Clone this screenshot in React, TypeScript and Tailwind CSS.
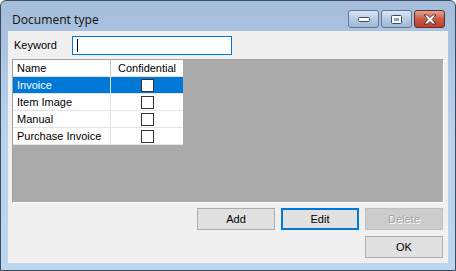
import { useState } from 'react';

interface DocType {
  name: string;
  confidential: boolean;
}

const rows: DocType[] = [
  { name: 'Invoice', confidential: false },
  { name: 'Item Image', confidential: false },
  { name: 'Manual', confidential: false },
  { name: 'Purchase Invoice', confidential: false },
];

function CaptionButton({ kind }: { kind: 'min' | 'max' | 'close' }) {
  const base =
    kind === 'close'
      ? 'bg-gradient-to-b from-[#e3a493] via-[#cb5a45] to-[#b9412d] border-[#6b2a23]'
      : 'bg-gradient-to-b from-[#dbe6f3] via-[#b7cbe3] to-[#9fb8d6] border-[#5f7694]';
  return (
    <div className={`w-[31px] h-[18px] rounded-[3px] border flex items-center justify-center ${base}`}>
      {kind === 'min' && (
        <svg width="12" height="5" viewBox="0 0 12 5">
          <rect x="0.5" y="0.5" width="11" height="4" rx="1" fill="#fff" stroke="#3a4a60" />
        </svg>
      )}
      {kind === 'max' && (
        <svg width="11" height="9" viewBox="0 0 11 9">
          <rect x="0.5" y="0.5" width="10" height="8" rx="1" fill="#fff" stroke="#3a4a60" />
          <rect x="3" y="3" width="5" height="3" fill="#8aa3c3" />
        </svg>
      )}
      {kind === 'close' && (
        <svg width="14" height="11" viewBox="0 0 14 11">
          <path
            d="M1 1h3.5L7 3.6 9.5 1H13L9.2 5.5 13 10H9.5L7 7.4 4.5 10H1l3.8-4.5z"
            fill="#fff"
            stroke="#4a2a28"
            strokeWidth="0.9"
            strokeLinejoin="round"
          />
        </svg>
      )}
    </div>
  );
}

function WinButton({
  label,
  focused,
  disabled,
}: {
  label: string;
  focused?: boolean;
  disabled?: boolean;
}) {
  return (
    <button
      className={`w-[78px] h-[22px] flex items-center justify-center text-[11px] leading-none ${
        focused
          ? 'border-2 border-[#0078d7] bg-[#e1e1e1] text-black'
          : disabled
          ? 'border border-[#bfbfbf] bg-[#cccccc] text-[#a0a0a0] [text-shadow:1px_1px_0_#ffffff]'
          : 'border border-[#adadad] bg-[#e1e1e1] text-black'
      }`}
    >
      {label}
    </button>
  );
}

export default function App() {
  const [keyword, setKeyword] = useState('');

  return (
    <div className="w-[456px] h-[271px] bg-white font-['Liberation_Sans',Arial,sans-serif]">
      <div className="w-full h-full flex flex-col border border-[#3b4a5c] rounded-t-[6px] bg-gradient-to-b from-[#a3bddb] via-[#bad2eb] to-[#bcd6ee]">
        {/* title bar */}
        <div className="h-[30px] flex items-start justify-between shrink-0">
          <span className="pl-[11px] pt-[11px] text-[12px] leading-[16px] text-[#1a1a1a] font-['Noto_Sans',sans-serif]">
            Document type
          </span>
          <div className="flex gap-[2px] pt-[9px] pr-[10px]">
            <CaptionButton kind="min" />
            <CaptionButton kind="max" />
            <CaptionButton kind="close" />
          </div>
        </div>

        {/* client area */}
        <div className="flex-1 mx-[7px] mb-[7px] bg-[#f0f0f0] flex flex-col text-[11px] text-black">
          <div className="flex items-center h-[28px] pt-[1px]">
            <span className="pl-[6px] w-[64px]">Keyword</span>
            <div className="w-[160px] h-[19px] border border-[#0078d7] bg-white flex items-center pl-[3px]">
              <input
                value={keyword}
                onChange={(e) => setKeyword(e.target.value)}
                className="w-full h-full outline-none bg-transparent text-[11px]"
              />
              <span className="absolute w-px h-[13px] bg-black ml-[1px]" />
            </div>
          </div>

          <div className="mx-[4px] h-[144px] bg-[#ababab] border-t border-l border-[#a0a0a0] border-b border-r border-b-white border-r-white">
            <div className="w-[170px] bg-white">
              <div className="flex h-[17px] border-b border-[#e3e3e3]">
                <div className="w-[98px] pl-[4px] flex items-center border-r border-[#c8c8c8]">Name</div>
                <div className="flex-1 flex items-center justify-center">Confidential</div>
              </div>
              {rows.map((row, i) => {
                const selected = i === 0;
                return (
                  <div
                    key={row.name}
                    className={`flex h-[17px] border-b ${
                      selected ? 'border-[#e3e3e3]' : 'border-[#e3e3e3]'
                    }`}
                  >
                    <div
                      className={`w-[98px] pl-[4px] flex items-center border-r border-[#e3e3e3] ${
                        selected ? 'bg-[#0078d7] text-white' : ''
                      }`}
                    >
                      {row.name}
                    </div>
                    <div
                      className={`flex-1 flex items-center justify-center ${selected ? 'bg-[#0078d7]' : ''}`}
                    >
                      <div className="w-[13px] h-[13px] border border-[#333333] bg-white" />
                    </div>
                  </div>
                );
              })}
            </div>
          </div>

          <div className="flex justify-end gap-[6px] pr-[5px] pt-[5px]">
            <WinButton label="Add" />
            <WinButton label="Edit" focused />
            <WinButton label="Delete" disabled />
          </div>
          <div className="flex justify-end pr-[5px] pt-[6px]">
            <WinButton label="OK" />
          </div>
        </div>
      </div>
    </div>
  );
}
